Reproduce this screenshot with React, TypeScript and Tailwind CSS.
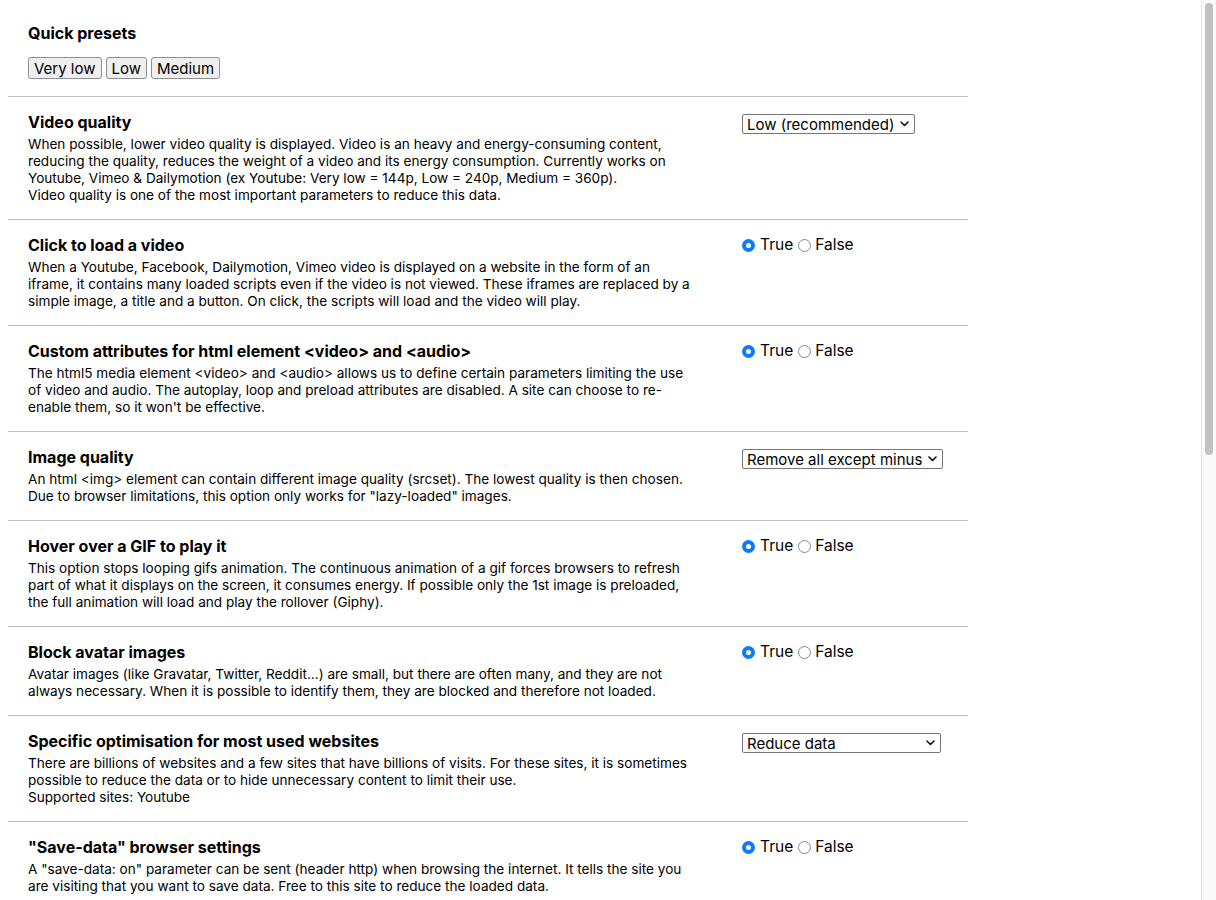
import React from 'react'

const FONT = "font-['Inter','Liberation_Sans',sans-serif]"

type Setting = {
     title: string
     lines: string[]
     control: { type: 'radio'; value: boolean } | { type: 'select'; label: string; width: string }
}

const settings: Setting[] = [
     {
          title: 'Video quality',
          lines: [
               'When possible, lower video quality is displayed. Video is an heavy and energy-consuming content,',
               'reducing the quality, reduces the weight of a video and its energy consumption. Currently works on',
               'Youtube, Vimeo & Dailymotion (ex Youtube: Very low = 144p, Low = 240p, Medium = 360p).',
               'Video quality is one of the most important parameters to reduce this data.',
          ],
          control: { type: 'select', label: 'Low (recommended)', width: 'w-[173px]' },
     },
     {
          title: 'Click to load a video',
          lines: [
               'When a Youtube, Facebook, Dailymotion, Vimeo video is displayed on a website in the form of an',
               'iframe, it contains many loaded scripts even if the video is not viewed. These iframes are replaced by a',
               'simple image, a title and a button. On click, the scripts will load and the video will play.',
          ],
          control: { type: 'radio', value: true },
     },
     {
          title: 'Custom attributes for html element <video> and <audio>',
          lines: [
               'The html5 media element <video> and <audio> allows us to define certain parameters limiting the use',
               'of video and audio. The autoplay, loop and preload attributes are disabled. A site can choose to re-',
               "enable them, so it won't be effective.",
          ],
          control: { type: 'radio', value: true },
     },
     {
          title: 'Image quality',
          lines: [
               'An html <img> element can contain different image quality (srcset). The lowest quality is then chosen.',
               'Due to browser limitations, this option only works for "lazy-loaded" images.',
          ],
          control: { type: 'select', label: 'Remove all except minus', width: 'w-[201px]' },
     },
     {
          title: 'Hover over a GIF to play it',
          lines: [
               'This option stops looping gifs animation. The continuous animation of a gif forces browsers to refresh',
               'part of what it displays on the screen, it consumes energy. If possible only the 1st image is preloaded,',
               'the full animation will load and play the rollover (Giphy).',
          ],
          control: { type: 'radio', value: true },
     },
     {
          title: 'Block avatar images',
          lines: [
               'Avatar images (like Gravatar, Twitter, Reddit...) are small, but there are often many, and they are not',
               'always necessary. When it is possible to identify them, they are blocked and therefore not loaded.',
          ],
          control: { type: 'radio', value: true },
     },
     {
          title: 'Specific optimisation for most used websites',
          lines: [
               'There are billions of websites and a few sites that have billions of visits. For these sites, it is sometimes',
               'possible to reduce the data or to hide unnecessary content to limit their use.',
               'Supported sites: Youtube',
          ],
          control: { type: 'select', label: 'Reduce data', width: 'w-[199px]' },
     },
     {
          title: '"Save-data" browser settings',
          lines: [
               'A "save-data: on" parameter can be sent (header http) when browsing the internet. It tells the site you',
               'are visiting that you want to save data. Free to this site to reduce the loaded data.',
          ],
          control: { type: 'radio', value: true },
     },
]

function Radio({ checked }: { checked: boolean }) {
     return checked ? (
          <span className="w-[13px] h-[13px] shrink-0 rounded-full bg-[#0a7aff] flex items-center justify-center">
               <span className="w-[5px] h-[5px] rounded-full bg-white" />
          </span>
     ) : (
          <span className="w-[13px] h-[13px] shrink-0 rounded-full border border-[#8a8a8a] bg-white" />
     )
}

function Control({ control }: { control: Setting['control'] }) {
     if (control.type === 'radio') {
          return (
               <div className="flex items-center gap-[5px] h-5 text-[15.5px] text-black">
                    <Radio checked={control.value} />
                    <span>True</span>
                    <Radio checked={!control.value} />
                    <span className="-ml-[1px]">False</span>
               </div>
          )
     }
     return (
          <div className={`mt-[2px] h-5 ${control.width} border border-[#767676] rounded-[2px] bg-white flex items-center justify-between pl-[4px] pr-[5px] text-[15px] leading-none text-black whitespace-nowrap`}>
               <span>{control.label}</span>
               <svg width="9" height="6" viewBox="0 0 9 6" fill="none" className="shrink-0">
                    <path d="M1 1l3.5 3.5L8 1" stroke="#111" strokeWidth="1.6" strokeLinecap="round" strokeLinejoin="round" />
               </svg>
          </div>
     )
}

export default function App() {
     return (
          <div className={`${FONT} h-[900px] flex bg-white text-black overflow-hidden`}>
               <main className="flex-1 pt-2 pl-2">
                    <div className="w-[960px]">
                         <section className="px-5 pt-[15px] pb-[17px]">
                              <h2 className="text-base leading-5 font-bold mb-[14px]">Quick presets</h2>
                              <div className="flex gap-[4px]">
                                   {['Very low', 'Low', 'Medium'].map((p) => (
                                        <button key={p} className="h-[22px] px-[5px] bg-[#efefef] border border-[#8f8f8f] rounded-[3px] text-[15px] leading-none text-black">
                                             {p}
                                        </button>
                                   ))}
                              </div>
                         </section>
                         {settings.map((s) => (
                              <section key={s.title} className="border-t border-[#bdbdbd] px-5 pt-[15px] pb-[15px] flex">
                                   <div className="w-[714px] shrink-0">
                                        <h3 className="text-base leading-5 font-bold mb-1">{s.title}</h3>
                                        <p className="text-[13.6px] leading-[17px] whitespace-nowrap">
                                             {s.lines.map((l, i) => (
                                                  <React.Fragment key={i}>
                                                       {l}
                                                       {i < s.lines.length - 1 && <br />}
                                                  </React.Fragment>
                                             ))}
                                        </p>
                                   </div>
                                   <div className="flex-1">
                                        <Control control={s.control} />
                                   </div>
                              </section>
                         ))}
                    </div>
               </main>
               <aside className="w-[15px] shrink-0 bg-[#fafafa] border-l border-[#e8e8e8] pt-[3px] flex justify-center">
                    <div className="w-[8px] h-[452px] rounded-full bg-[#c1c1c1]" />
               </aside>
          </div>
     )
}
